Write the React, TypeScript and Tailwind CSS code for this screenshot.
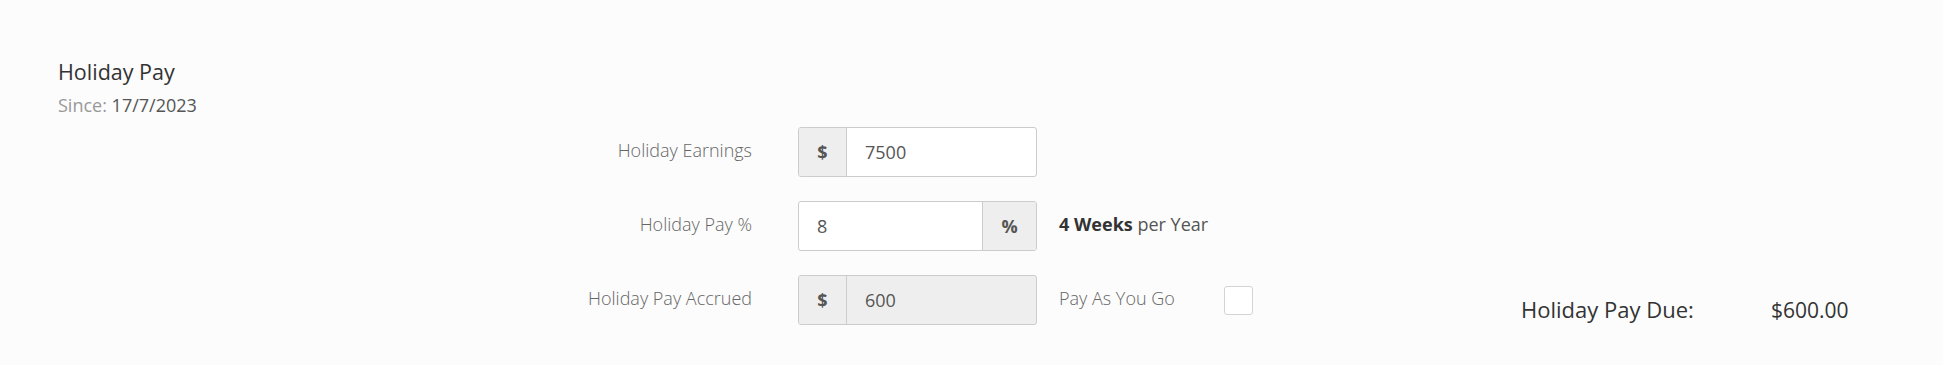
import React from "react";

const font = { fontFamily: '"Open Sans", "Liberation Sans", sans-serif' };

function Label({ children }: { children: React.ReactNode }) {
  return (
    <div className="w-[694px] shrink-0 pt-[11px] text-right text-[18px] leading-[24px] font-light text-[#666]">
      {children}
    </div>
  );
}

function Addon({ children, className = "" }: { children: React.ReactNode; className?: string }) {
  return (
    <div
      className={`flex items-center justify-center bg-[#eeeeee] text-[18px] font-bold text-[#555] ${className}`}
    >
      {children}
    </div>
  );
}

export default function App() {
  return (
    <div className="min-h-[365px] w-full bg-[#fcfcfc] pl-[58px] pt-[57px]" style={font}>
      {/* Header */}
      <div>
        <h2 className="text-[21.5px] leading-[29px] font-medium text-[#333]">Holiday Pay</h2>
        <p className="mt-[7px] text-[18px] leading-[24px] text-[#555]">
          <span className="text-[#999]">Since:</span> 17/7/2023
        </p>
      </div>

      {/* Form */}
      <div className="mt-[10px] flex flex-col gap-[24px]">
        {/* Holiday Earnings */}
        <div className="flex h-[50px]">
          <Label>Holiday Earnings</Label>
          <div className="ml-[46px] flex h-[50px] w-[239px] overflow-hidden rounded-[3px] border border-[#cccccc] bg-white">
            <Addon className="w-[48px] border-r border-[#cccccc]">$</Addon>
            <div className="flex flex-1 items-center pl-[18px] text-[18px] text-[#555]">7500</div>
          </div>
        </div>

        {/* Holiday Pay % */}
        <div className="flex h-[50px]">
          <Label>Holiday Pay %</Label>
          <div className="ml-[46px] flex h-[50px] w-[239px] overflow-hidden rounded-[3px] border border-[#cccccc] bg-white">
            <div className="flex flex-1 items-center pl-[18px] text-[18px] text-[#555]">8</div>
            <Addon className="w-[54px] border-l border-[#cccccc]">%</Addon>
          </div>
          <div className="ml-[22px] pt-[11px] text-[18px] leading-[24px] text-[#555]">
            <span className="font-bold text-[#333]">4 Weeks</span> per Year
          </div>
        </div>

        {/* Holiday Pay Accrued */}
        <div className="flex h-[50px]">
          <Label>Holiday Pay Accrued</Label>
          <div className="ml-[46px] flex h-[50px] w-[239px] overflow-hidden rounded-[3px] border border-[#cccccc] bg-[#eeeeee]">
            <Addon className="w-[48px] border-r border-[#cccccc]">$</Addon>
            <div className="flex flex-1 items-center pl-[18px] text-[18px] text-[#555]">600</div>
          </div>
          <div className="ml-[22px] w-[165px] pt-[11px] text-[18px] leading-[24px] font-light text-[#666]">
            Pay As You Go
          </div>
          <div className="flex h-[50px] items-center">
            <div className="h-[29px] w-[29px] rounded-[3px] border border-[#d4d4d4] bg-white" />
          </div>
          <div className="ml-[268px] flex items-baseline pt-[20px] leading-[28px] font-medium text-[#333]">
            <span className="w-[250px] text-[22px]">Holiday Pay Due:</span>
            <span className="text-[21px]">$600.00</span>
          </div>
        </div>
      </div>
    </div>
  );
}
